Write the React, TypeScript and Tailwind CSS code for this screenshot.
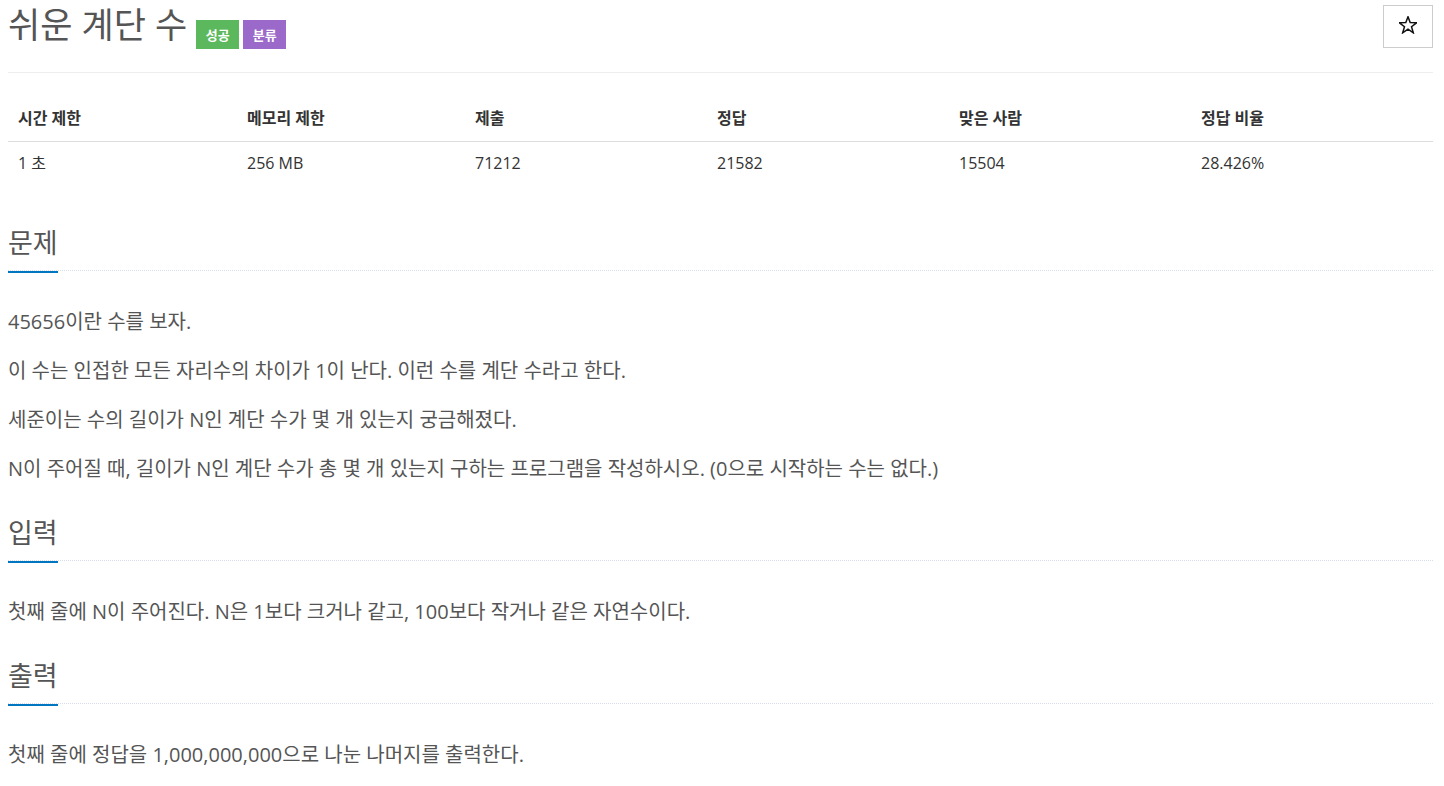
const font = "font-['Open_Sans','Noto_Sans_CJK_KR',sans-serif]";

const info = [
  { label: "시간 제한", value: "1 초", w: "w-[229px]" },
  { label: "메모리 제한", value: "256 MB", w: "w-[228px]" },
  { label: "제출", value: "71212", w: "w-[242px]" },
  { label: "정답", value: "21582", w: "w-[242px]" },
  { label: "맞은 사람", value: "15504", w: "w-[242px]" },
  { label: "정답 비율", value: "28.426%", w: "" },
];

function StarIcon() {
  return (
    <svg width="18" height="18" viewBox="0 0 18 18" className="block">
      <polygon
        points="9,0.8 11.18,6.6 17.56,6.8 12.52,10.7 14.29,16.8 9,13.2 3.71,16.8 5.48,10.7 0.44,6.8 6.82,6.6"
        fill="none"
        stroke="#111"
        strokeWidth="1.5"
        strokeLinejoin="miter"
      />
    </svg>
  );
}

function Headline({ title }: { title: string }) {
  return (
    <div className="border-b border-dotted border-[#d5deea]">
      <h2 className="mb-[-3px] inline-block border-b-2 border-[#0076c0] pb-[13px] text-[27px] leading-[30px] font-normal text-[#555]">
        {title}
      </h2>
    </div>
  );
}

function Section({ title, lines }: { title: string; lines: string[] }) {
  return (
    <section className="mb-[34px]">
      <Headline title={title} />
      <div className="mt-[36px] text-[20px] leading-[30px] text-[#555]">
        {lines.map((l) => (
          <p key={l} className="mb-[19px]">
            {l}
          </p>
        ))}
      </div>
    </section>
  );
}

export default function App() {
  return (
    <div className={`min-h-screen bg-white pl-2 pr-[11px] text-[#333] ${font}`}>
      {/* Title row */}
      <div className="flex h-[73px] items-start justify-between border-b border-[#eee]">
        <h1 className="mt-[5px] flex items-start text-[35px] leading-[40px] font-normal text-[#555]">
          <span>쉬운 계단 수</span>
          <span className="ml-[9px] mt-[15px] flex h-[29px] w-[43px] items-center justify-center bg-[#5cb85c] text-[13px] font-bold text-white">
            성공
          </span>
          <span className="ml-[4px] mt-[15px] flex h-[29px] w-[43px] items-center justify-center bg-[#9b69c9] text-[13px] font-bold text-white">
            분류
          </span>
        </h1>
        <button className="mt-[5px] flex h-[43px] w-[50px] items-center justify-center border border-[#ccc] bg-white pb-[3px]">
          <StarIcon />
        </button>
      </div>

      {/* Problem info table */}
      <table className="mt-[26px] w-full border-collapse text-left text-[16px]">
        <thead>
          <tr className="border-b border-[#ddd]">
            {info.map((c) => (
              <th key={c.label} className={`${c.w} pl-[10px] pr-2 pt-2 pb-[12px] leading-[22px] font-bold text-[#333]`}>
                {c.label}
              </th>
            ))}
          </tr>
        </thead>
        <tbody>
          <tr>
            {info.map((c) => (
              <td key={c.label} className="pl-[10px] pr-2 pt-[10px] pb-2 leading-[22px] text-[#333]">
                {c.value}
              </td>
            ))}
          </tr>
        </tbody>
      </table>

      <div className="mt-[46px]">
        <Section
          title="문제"
          lines={[
            "45656이란 수를 보자.",
            "이 수는 인접한 모든 자리수의 차이가 1이 난다. 이런 수를 계단 수라고 한다.",
            "세준이는 수의 길이가 N인 계단 수가 몇 개 있는지 궁금해졌다.",
            "N이 주어질 때, 길이가 N인 계단 수가 총 몇 개 있는지 구하는 프로그램을 작성하시오. (0으로 시작하는 수는 없다.)",
          ]}
        />
        <Section title="입력" lines={["첫째 줄에 N이 주어진다. N은 1보다 크거나 같고, 100보다 작거나 같은 자연수이다."]} />
        <Section title="출력" lines={["첫째 줄에 정답을 1,000,000,000으로 나눈 나머지를 출력한다."]} />
      </div>
    </div>
  );
}
